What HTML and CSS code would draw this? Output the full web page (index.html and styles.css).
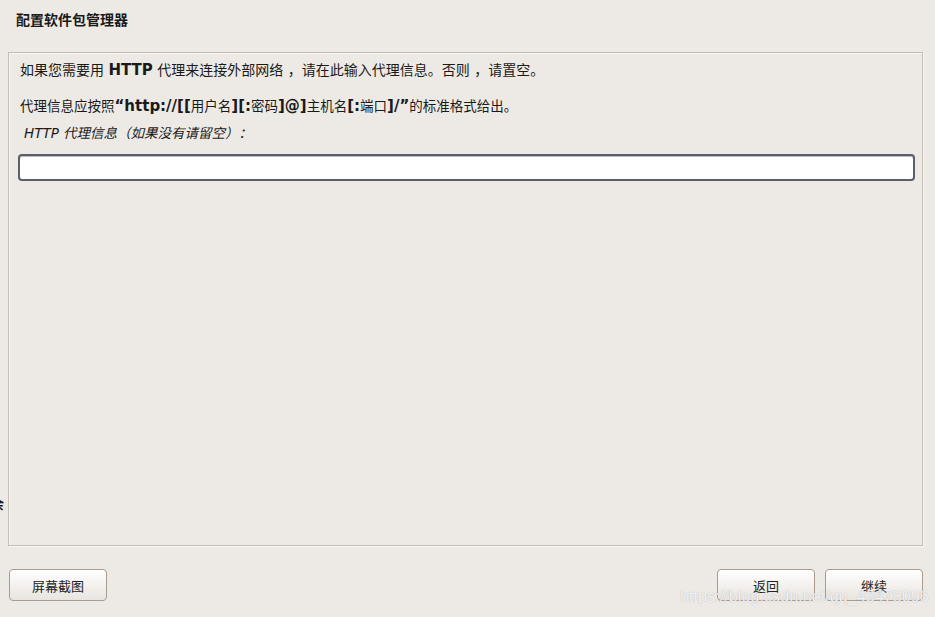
FILE: index.html
```html
<!DOCTYPE html>
<html lang="zh">
<head>
<meta charset="utf-8">
<link rel="stylesheet" href="styles.css">
</head>
<body>
<div class="page">
  <h1 class="title">配置软件包管理器</h1>
  <div class="panel">
    <p class="line1">如果您需要用 <b>HTTP</b> 代理来连接外部网络 ，请在此输入代理信息。否则 ，请置空。</p>
    <p class="line2">代理信息应按照<b>“http://[[</b>用户名<b>][:</b>密码<b>]@]</b>主机名<b>[:</b>端口<b>]/”</b>的标准格式给出。</p>
    <label class="label" for="proxy">HTTP 代理信息（如果没有请留空）：</label>
    <input id="proxy" class="field" type="text">
  </div>
  <div class="buttons">
    <button class="btn">屏幕截图</button>
    <div class="spacer"></div>
    <button class="btn">返回</button>
    <button class="btn">继续</button>
  </div>
  <span class="stray">余</span>
  <span class="watermark">https://blog.csdn.net/qq_43478096</span>
</div>
</body>
</html>
```
FILE: styles.css
```css
html, body {
  margin: 0;
  padding: 0;
  background: #edeae5;
}
body {
  width: 935px;
  height: 617px;
  overflow: hidden;
  font-family: "DejaVu Sans", "Noto Sans CJK SC", sans-serif;
  color: #1a1a1a;
}
.page {
  position: relative;
  height: 617px;
  display: flex;
  flex-direction: column;
  padding: 0 12px 0 8px;
  box-sizing: border-box;
}
.title {
  margin: 0;
  padding: 12px 0 0 8px;
  height: 52px;
  box-sizing: border-box;
  font-size: 14px;
  font-weight: bold;
  line-height: 17px;
}
.panel {
  height: 494px;
  box-sizing: border-box;
  border: 1px solid #c4bcb2;
  box-shadow: inset 1px 1px 0 #f8f6f3, 1px 1px 0 #f8f6f3;
  padding: 8px 8px 0 9px;
  display: flex;
  flex-direction: column;
}
.panel p {
  margin: 0;
}
.line1 {
  font-size: 14px;
  line-height: 18px;
  padding-left: 2px;
}
.line1 b {
  font-size: 15px;
}
.line2 {
  margin-top: 18px !important;
  font-size: 13.5px;
  line-height: 18px;
  padding-left: 2px;
}
.line2 b {
  font-size: 15px;
}
.label {
  font-size: 13.5px;
  font-style: italic;
  line-height: 18px;
  padding-left: 6px;
  margin-top: 9px;
}
.field {
  margin-top: 12px;
  height: 27px;
  box-sizing: border-box;
  width: 897px;
  border: 2px solid #5d5f68;
  border-radius: 4px;
  background: #fff;
  box-shadow: inset 0 1px 0 #b8bcc8;
  outline: none;
}
.buttons {
  display: flex;
  align-items: flex-start;
  padding-top: 23px;
  gap: 10px;
  padding-left: 1px;
}
.spacer {
  flex: 1;
}
.btn {
  width: 98px;
  height: 32px;
  box-sizing: border-box;
  border: 1px solid #a99d90;
  border-radius: 4px;
  background: linear-gradient(#ffffff, #f2efeb 60%, #e8e4df);
  font-family: "Noto Sans CJK SC", sans-serif;
  font-size: 13px;
  color: #222;
  padding: 0;
}
.stray {
  position: absolute;
  left: -9px;
  top: 494px;
  font-size: 13px;
  font-weight: bold;
  font-family: "Noto Sans CJK SC", sans-serif;
}
.watermark {
  position: absolute;
  left: 680px;
  top: 588px;
  font-family: "Liberation Sans", sans-serif;
  font-size: 16px;
  color: rgba(255, 255, 255, 0.85);
  text-shadow: 0 0 1px rgba(120, 120, 120, 0.6);
  letter-spacing: 0.1px;
}
```
